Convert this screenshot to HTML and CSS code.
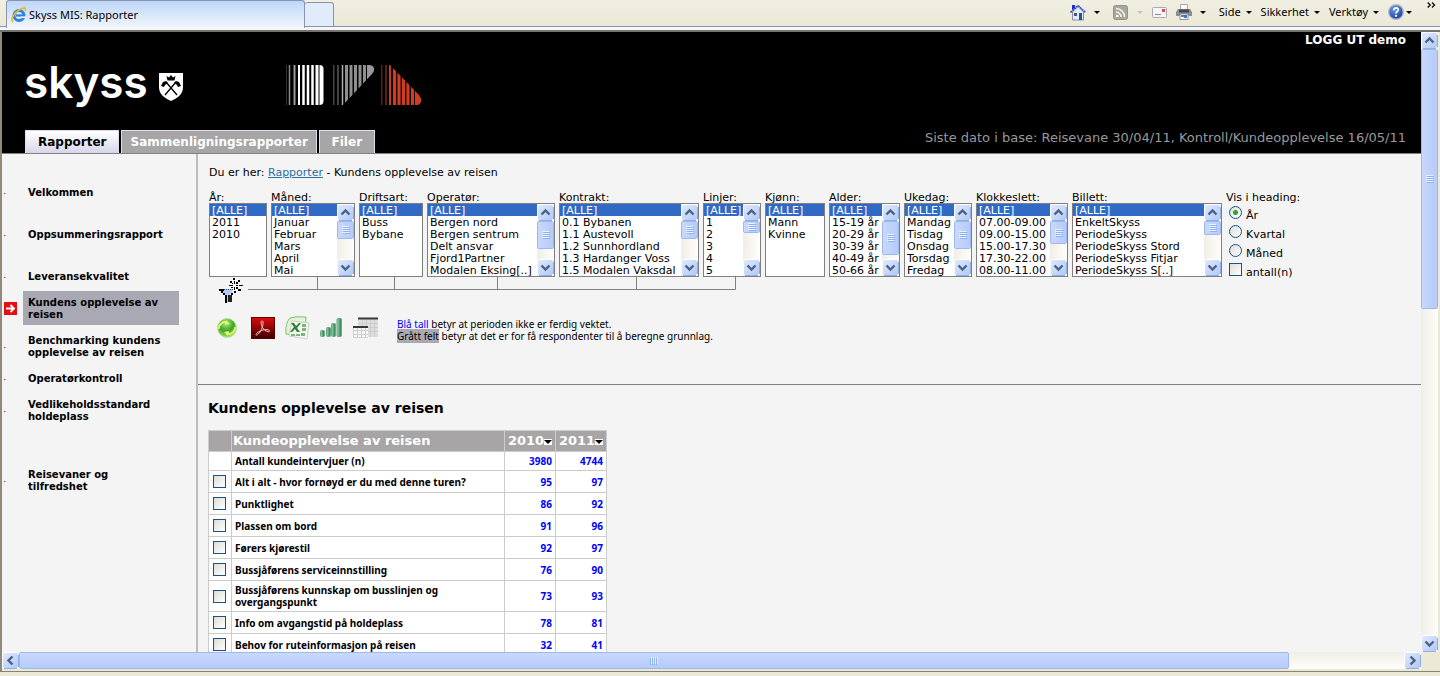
FILE: index.html
```html
<!DOCTYPE html>
<html lang="no">
<head>
<meta charset="utf-8">
<title>Skyss MIS: Rapporter</title>
<link rel="stylesheet" href="styles.css">
</head>
<body>
<svg width="0" height="0" class="defs" aria-hidden="true">
  <defs>
    <linearGradient id="btn" x1="0" y1="0" x2="1" y2="1"><stop offset="0" stop-color="#e1eafe"/><stop offset="1" stop-color="#aec8f7"/></linearGradient>
    <linearGradient id="green" x1="0" y1="0" x2="1" y2="0"><stop offset="0" stop-color="#9fd8b4"/><stop offset="1" stop-color="#1c7a45"/></linearGradient>
    <linearGradient id="red" x1="0" y1="0" x2="0" y2="1"><stop offset="0" stop-color="#e00a0a"/><stop offset="1" stop-color="#3c0000"/></linearGradient>
    <radialGradient id="ball" cx=".45" cy=".25" r=".8"><stop offset="0" stop-color="#a5ec7c"/><stop offset=".5" stop-color="#3fa52c"/><stop offset="1" stop-color="#b6ec6a"/></radialGradient>
    <radialGradient id="help" cx=".4" cy=".3" r=".7"><stop offset="0" stop-color="#6c9cf0"/><stop offset="1" stop-color="#1c3f9c"/></radialGradient>
  </defs>
  <symbol id="up" viewBox="0 0 17 17"><rect x=".5" y=".5" width="16" height="16" rx="2" fill="url(#btn)" stroke="#fff"/><path d="M2 16.500H15M16.500 3V15" stroke="#8fb0e0" fill="none"/><path d="M4.500 10.500 8.500 6.500l4 4" fill="none" stroke="#4d6185" stroke-width="2.400"/></symbol>
  <symbol id="down" viewBox="0 0 17 17"><rect x=".5" y=".5" width="16" height="16" rx="2" fill="url(#btn)" stroke="#fff"/><path d="M2 16.500H15M16.500 3V15" stroke="#8fb0e0" fill="none"/><path d="M4.500 6.500l4 4 4-4" fill="none" stroke="#4d6185" stroke-width="2.400"/></symbol>
  <symbol id="left" viewBox="0 0 17 17"><rect x=".5" y=".5" width="16" height="16" rx="2" fill="url(#btn)" stroke="#fff"/><path d="M2 16.500H15M16.500 3V15" stroke="#8fb0e0" fill="none"/><path d="M10.500 4.500l-4 4 4 4" fill="none" stroke="#4d6185" stroke-width="2.400"/></symbol>
  <symbol id="right" viewBox="0 0 17 17"><rect x=".5" y=".5" width="16" height="16" rx="2" fill="url(#btn)" stroke="#fff"/><path d="M2 16.500H15M16.500 3V15" stroke="#8fb0e0" fill="none"/><path d="M6.500 4.500l4 4-4 4" fill="none" stroke="#4d6185" stroke-width="2.400"/></symbol>
  <symbol id="grip" viewBox="0 0 8 8"><path d="M0 .5h7M0 2.500h7M0 4.500h7M0 6.500h7" stroke="#eef4fe"/><path d="M1 1.500h7M1 3.500h7M1 5.500h7M1 7.500h7" stroke="#8cb0f8"/></symbol>
  <symbol id="caret" viewBox="0 0 6 3"><path d="M0 0h6L3 3z" fill="currentColor"/></symbol>
</svg>

<header class="browser">
  <div class="browser-tabs">
    <button class="browser-tab">
      <svg width="16" height="16" viewBox="0 0 16 16"><circle cx="8" cy="8.500" r="5" fill="none" stroke="#2a86dc" stroke-width="3"/><path d="M5 8.500h9" stroke="#2a86dc" stroke-width="2.200"/><path d="M10 10.200h5" stroke="#eaf2fd" stroke-width="1.600"/><path d="M2 15C-1 13 3 6 8 3s8-3 6 1" fill="none" stroke="#efb52c" stroke-width="1.600"/></svg>
      <span>Skyss MIS: Rapporter</span>
    </button>
    <button class="browser-newtab" aria-label="Ny fane"></button>
  </div>
  <div class="browser-tools">
    <button class="tool" aria-label="Hjem"><svg width="16" height="17" viewBox="0 0 16 17"><path d="M2.500 8v8h11V8L8 2.500z" fill="#e4ebf5" stroke="#8492ac"/><path d="M.5 8.500 8 1.500l7.500 7" fill="none" stroke="#2f4fb8" stroke-width="1.600" stroke-dasharray="2 .6"/><path d="M2 1h3v3L2 6z" fill="#1c2fc8"/><path d="M9 9h3v7H9z" fill="#24558f"/><path d="M4 9h3v3H4z" fill="#4b5a78"/></svg><svg class="caret home-caret" width="6" height="3"><use href="#caret"/></svg></button>
    <button class="tool tool-rss" aria-label="Feeder"><svg width="15" height="15" viewBox="0 0 15 15"><rect x=".5" y=".5" width="14" height="14" rx="2" fill="#a9a79c" stroke="#96948a"/><circle cx="4.200" cy="11" r="1.300" fill="#fff"/><path d="M3 7a5 5 0 0 1 5 5M3 3.500A8.500 8.500 0 0 1 11.500 12" fill="none" stroke="#f4f3ec" stroke-width="1.600"/></svg><svg class="caret pale" width="6" height="3"><use href="#caret"/></svg></button>
    <button class="tool" aria-label="E-post"><svg width="15" height="11" viewBox="0 0 15 11"><rect x=".5" y=".5" width="14" height="10" rx="1" fill="#f6f6fa" stroke="#a9a9b4"/><path d="M10 2h3v3h-3z" fill="#e0484c"/><path d="M3 7.500h6" stroke="#8a8a96"/></svg></button>
    <button class="tool tool-print" aria-label="Skriv ut"><svg width="16" height="16" viewBox="0 0 16 16"><path d="M4.500 6V.5h7V6" fill="#fff" stroke="#a8a8ac"/><path d="M2 5h12l2 3v4H0V8z" fill="#8c8d92"/><path d="M3 5.500h10v3H3z" fill="#44464c"/><path d="M4 10h8v5.500H4z" fill="#fff" stroke="#8d9299"/><path d="M5 11h3v2H5z" fill="#2e9ca0"/><path d="M8 11h3v3H8z" fill="#3c78d0"/></svg><svg class="caret" width="6" height="3"><use href="#caret"/></svg></button>
    <button class="tool tool-text">Side <svg class="caret" width="6" height="3"><use href="#caret"/></svg></button>
    <button class="tool tool-text">Sikkerhet <svg class="caret" width="6" height="3"><use href="#caret"/></svg></button>
    <button class="tool tool-text">Verktøy <svg class="caret" width="6" height="3"><use href="#caret"/></svg></button>
    <button class="tool tool-help" aria-label="Hjelp"><svg width="16" height="16" viewBox="0 0 16 16"><circle cx="8" cy="8" r="7.300" fill="url(#help)" stroke="#a9b6cc" stroke-width="1.400"/><path d="M5.800 6.200C5.800 3 10.500 3.300 10.300 6 10.200 7.500 8 7.500 8 9.500" fill="none" stroke="#fff" stroke-width="1.700"/><circle cx="8" cy="11.800" r="1.100" fill="#fff"/></svg><svg class="caret" width="6" height="3"><use href="#caret"/></svg></button>
    <button class="tool-more" aria-label="Mer"><svg width="9" height="6" viewBox="0 0 9 6"><path d="M.7.5 3.200 3 .7 5.500M5 .5 7.500 3 5 5.500" fill="none" stroke="#111" stroke-width="1.400"/></svg></button>
  </div>
</header>

<div class="viewport">
  <div class="page">
    <div class="masthead">
      <div class="masthead-top">
        <div class="logo">
          <span class="wordmark">skyss</span>
          <svg width="24" height="28" viewBox="0 0 24 28"><path d="M0 0h24v14c0 7-5 11-12 14C5 25 0 21 0 14z" fill="#fff"/><path d="M6 22 17 9M18 22 7 9" stroke="#000" stroke-width="1.300"/><path d="M2 13 4 9l3-1 2 2-3 2-1 2zM22 13l-2-4-3-1-2 2 3 2 1 2z" fill="#000"/><path d="M7.500 3l2.500 1.500L12 2l2 2.500L16.500 3l-1 4.500h-7z" fill="#000"/></svg>
        </div>
        <svg class="stripes" width="136" height="40" viewBox="0 0 136 40">
          <path d="M.5 0v40" stroke="#333"/><path d="M3.500 0v40" stroke="#888" stroke-width="1.500"/><path d="M8.500 0v40" stroke="#999" stroke-width="2"/><path d="M13 0v40" stroke="#fff" stroke-width="2"/><path d="M17.500 0v40M22 0v40M26.500 0v40" stroke="#fff" stroke-width="2.500"/><path d="M31 0v40" stroke="#fff" stroke-width="3"/><path d="M33.500 0q4 0 4 4v32q0 4-4 4z" fill="#fff"/>
          <g transform="translate(47)"><clipPath id="c2"><path d="M0 0H37Q42 1 41 6L39 9 10 40H0z"/></clipPath><g clip-path="url(#c2)"><path d="M.5 0v40M5 0v40" stroke="#444" stroke-width="2"/><path d="M9.500 0v40" stroke="#aaa" stroke-width="1.500"/><path d="M13.500 0v40M18 0v40M22.500 0v40M27 0v40M31.500 0v40" stroke="#8f8f8f" stroke-width="3"/><path d="M34 0h7v40h-7z" fill="#999"/></g></g>
          <g transform="translate(95)"><clipPath id="c3"><path d="M0 0h9L38 30Q43 37 37 40H0z"/></clipPath><g clip-path="url(#c3)"><path d="M.5 0v40M5 0v40" stroke="#5a2217" stroke-width="2"/><path d="M9 0v40" stroke="#d9492b" stroke-width="1.800"/><path d="M13.500 0v40M18 0v40M22.500 0v40M27 0v40M31.500 0v40" stroke="#d03c20" stroke-width="3.200"/><path d="M34 0h7v40h-7z" fill="#d03c20"/></g></g>
        </svg>
        <a class="logout" href="#">LOGG UT demo</a>
      </div>
      <div class="masthead-bottom">
        <nav class="tabs">
          <a class="tab active" href="#">Rapporter</a>
          <a class="tab" href="#">Sammenligningsrapporter</a>
          <a class="tab" href="#">Filer</a>
        </nav>
        <p class="status">Siste dato i base: Reisevane 30/04/11, Kontroll/Kundeopplevelse 16/05/11</p>
      </div>
    </div>

    <div class="body">
      <nav class="sidebar">
        <a class="nav wide" href="#">Velkommen</a>
        <a class="nav wide" href="#">Oppsummeringsrapport</a>
        <a class="nav" href="#">Leveransekvalitet</a>
        <a class="nav current" href="#"><svg class="arrow" width="13" height="13" viewBox="0 0 13 13"><rect width="13" height="13" fill="#e80c14"/><path d="M2 6.500h8M6.500 3 10 6.500 6.500 10" fill="none" stroke="#fff" stroke-width="1.800"/></svg>Kundens opplevelse av reisen</a>
        <a class="nav" href="#">Benchmarking kundens opplevelse av reisen</a>
        <a class="nav" href="#">Operatørkontroll</a>
        <a class="nav last" href="#">Vedlikeholdsstandard holdeplass</a>
        <a class="nav narrow" href="#">Reisevaner og tilfredshet</a>
      </nav>

      <main class="content">
        <section class="filters">
          <p class="crumbs">Du er her: <a href="#">Rapporter</a> - Kundens opplevelse av reisen</p>
          <form class="filter-row">
            <div class="field w58"><label for="f1">År:</label><div class="list"><select id="f1" size="6" multiple><option selected>[ALLE]</option><option>2011</option><option>2010</option></select></div></div>
            <div class="field w84"><label for="f2">Måned:</label><div class="list"><select id="f2" size="6" multiple><option selected>[ALLE]</option><option>Januar</option><option>Februar</option><option>Mars</option><option>April</option><option>Mai</option></select><div class="bar"><svg width="17" height="17"><use href="#up"/></svg><i class="thumb h17"><svg width="8" height="8"><use href="#grip"/></svg></i><svg class="end" width="17" height="17"><use href="#down"/></svg></div></div></div>
            <div class="field w64"><label for="f3">Driftsart:</label><div class="list"><select id="f3" size="6" multiple><option selected>[ALLE]</option><option>Buss</option><option>Bybane</option></select></div></div>
            <div class="field w128"><label for="f4">Operatør:</label><div class="list"><select id="f4" size="6" multiple><option selected>[ALLE]</option><option>Bergen nord</option><option>Bergen sentrum</option><option>Delt ansvar</option><option>Fjord1Partner</option><option>Modalen Eksing[..]</option></select><div class="bar"><svg width="17" height="17"><use href="#up"/></svg><i class="thumb h26"><svg width="8" height="8"><use href="#grip"/></svg></i><svg class="end" width="17" height="17"><use href="#down"/></svg></div></div></div>
            <div class="field w140"><label for="f5">Kontrakt:</label><div class="list"><select id="f5" size="6" multiple><option selected>[ALLE]</option><option>0.1 Bybanen</option><option>1.1 Austevoll</option><option>1.2 Sunnhordland</option><option>1.3 Hardanger Voss</option><option>1.5 Modalen Vaksdal</option></select><div class="bar"><svg width="17" height="17"><use href="#up"/></svg><i class="thumb h17"><svg width="8" height="8"><use href="#grip"/></svg></i><svg class="end" width="17" height="17"><use href="#down"/></svg></div></div></div>
            <div class="field w58"><label for="f6">Linjer:</label><div class="list"><select id="f6" size="6" multiple><option selected>[ALLE]</option><option>1</option><option>2</option><option>3</option><option>4</option><option>5</option></select><div class="bar"><svg width="17" height="17"><use href="#up"/></svg><i class="thumb h10"><svg width="8" height="8"><use href="#grip"/></svg></i><svg class="end" width="17" height="17"><use href="#down"/></svg></div></div></div>
            <div class="field w60"><label for="f7">Kjønn:</label><div class="list"><select id="f7" size="6" multiple><option selected>[ALLE]</option><option>Mann</option><option>Kvinne</option></select></div></div>
            <div class="field w71"><label for="f8">Alder:</label><div class="list"><select id="f8" size="6" multiple><option selected>[ALLE]</option><option>15-19 år</option><option>20-29 år</option><option>30-39 år</option><option>40-49 år</option><option>50-66 år</option></select><div class="bar"><svg width="17" height="17"><use href="#up"/></svg><i class="thumb h32"><svg width="8" height="8"><use href="#grip"/></svg></i><svg class="end" width="17" height="17"><use href="#down"/></svg></div></div></div>
            <div class="field w68"><label for="f9">Ukedag:</label><div class="list"><select id="f9" size="6" multiple><option selected>[ALLE]</option><option>Mandag</option><option>Tisdag</option><option>Onsdag</option><option>Torsdag</option><option>Fredag</option></select><div class="bar"><svg width="17" height="17"><use href="#up"/></svg><i class="thumb h26"><svg width="8" height="8"><use href="#grip"/></svg></i><svg class="end" width="17" height="17"><use href="#down"/></svg></div></div></div>
            <div class="field w92"><label for="f10">Klokkeslett:</label><div class="list"><select id="f10" size="6" multiple><option selected>[ALLE]</option><option>07.00-09.00</option><option>09.00-15.00</option><option>15.00-17.30</option><option>17.30-22.00</option><option>08.00-11.00</option></select><div class="bar"><svg width="17" height="17"><use href="#up"/></svg><i class="thumb h22"><svg width="8" height="8"><use href="#grip"/></svg></i><svg class="end" width="17" height="17"><use href="#down"/></svg></div></div></div>
            <div class="field w150"><label for="f11">Billett:</label><div class="list"><select id="f11" size="6" multiple><option selected>[ALLE]</option><option>EnkeltSkyss</option><option>PeriodeSkyss</option><option>PeriodeSkyss Stord</option><option>PeriodeSkyss Fitjar</option><option>PeriodeSkyss S[..]</option></select><div class="bar"><svg width="17" height="17"><use href="#up"/></svg><i class="thumb h12"><svg width="8" height="8"><use href="#grip"/></svg></i><svg class="end" width="17" height="17"><use href="#down"/></svg></div></div></div>
            <fieldset class="heading-choice">
              <legend>Vis i heading:</legend>
              <label><input type="radio" name="h" checked><span>År</span></label>
              <label><input type="radio" name="h"><span>Kvartal</span></label>
              <label><input type="radio" name="h"><span>Måned</span></label>
              <label><input type="checkbox"><span>antall(n)</span></label>
            </fieldset>
          </form>
          <div class="connectors">
            <button class="icon-btn" aria-label="Filter"><svg width="24" height="26" viewBox="0 0 24 26"><path d="M2 11h12l-1 3-3 3v7H7v-7l-4-3z" fill="#a9cdf8"/><path d="M0 11h5v2H0zM2 13h2v2H2zM4 15h2v2H4zM6 17h2v8H6zM12 15h2v2h-2z" fill="#000"/><path d="M9 17h4v7H9z" fill="#222"/><path d="M5 11.500h9" stroke="#446" stroke-dasharray="1 1"/><path d="M14 0h2v2h-2zM15 3h1v3h-1zM15 9h1v3h-1zM15 13h2v2h-2zM10 7h4v1h-4zM17 7h2v1h-2zM20 7h4v1h-4zM11 3h2v2h-2zM13 5h1v1h-1zM19 2h2v2h-2zM17 4h2v2h-2zM17 9h2v2h-2zM19 11h3v2h-3zM12 9h2v1h-2z" fill="#000"/></svg></button>
            <svg width="488" height="13" viewBox="0 0 488 13"><path d="M0 12.500h487.500V0M69.500 0v12M146.500 0v12M249.500 0v12M388.500 0v12" fill="none" stroke="#808080"/></svg>
          </div>
          <div class="actions">
            <div class="action-icons">
              <button class="icon-btn" aria-label="Oppdater"><svg width="20" height="20" viewBox="0 0 20 20"><circle cx="10" cy="10" r="9.500" fill="url(#ball)" stroke="#b9dfa4"/><path d="M1.500 11C2 6 6 3 10 4.500" fill="none" stroke="#e9f36b" stroke-width="2"/><path d="M9 2l4 4-5 1z" fill="#e9f36b"/><path d="M18.500 9c-.5 5-4.500 8-8.500 6.500" fill="none" stroke="#e9f36b" stroke-width="2"/><path d="M11 18l-4-4 5-1z" fill="#e9f36b"/></svg></button>
              <button class="icon-btn" aria-label="PDF"><svg width="24" height="22" viewBox="0 0 24 22"><rect x=".5" y=".5" width="23" height="21" fill="url(#red)" stroke="#5a0505"/><path d="M11 4c2 0 1 4 0 7-1.500 4-4 7-5.500 7-2 0 1-3 5-4.500 4-1.500 8-1 8 .5 0 2-5 0-7-3.500C10 7 9.500 4 11 4z" fill="none" stroke="#f3c9c9"/></svg></button>
              <button class="icon-btn" aria-label="Excel"><svg width="25" height="24" viewBox="0 0 25 24"><path d="M5 2Q11 0 21 1l-1 18L1 18Q0 7 5 2z" fill="#e3f3da" stroke="#83bd70"/><path d="M7 5l17 2-2 16L4 20z" fill="#f4f8f2" stroke="#c9d5c4"/><path d="M6 7h3l2 3 3-3h2l-4 5 3 4h-3l-2-3-3 3H5l4-5z" fill="#2f7e36"/><path d="M17 8h4v3h-4zM17 12h4v3h-4zM16 17h4v3h-4zM11 18h4v2h-4zM6 18h4v2H6z" fill="#7db67a"/></svg></button>
              <button class="icon-btn" aria-label="Graf"><svg width="23" height="20" viewBox="0 0 23 20"><rect x=".5" y="12.500" width="4" height="6" rx="1" fill="url(#green)" stroke="#6fa588"/><rect x="6.500" y="9.500" width="4" height="9" rx="1" fill="url(#green)" stroke="#6fa588"/><rect x="11.500" y="5.500" width="4" height="13" rx="1" fill="url(#green)" stroke="#6fa588"/><rect x="17" y=".5" width="4.500" height="18" rx="1" fill="url(#green)" stroke="#6fa588"/></svg></button>
              <button class="icon-btn" aria-label="Tabell"><svg width="26" height="22" viewBox="0 0 26 22"><path d="M5 2h20v18H5z" fill="#dedede"/><path d="M9.500 3v17M13.500 3v17M17.500 3v17M21.500 3v17M5 6.500h20M5 10.500h20M5 14.500h20" stroke="#ccc"/><path d="M5 1.500h20" stroke="#333840" stroke-width="2"/><path d="M0 10h15v11H0z" fill="#f6f6f6"/><path d="M.5 11v10M4.500 11v10M8.500 11v10M12.500 11v10M0 13.500h15M0 17.500h15M0 20.500h15" stroke="#d0d0d0"/><path d="M0 10h15" stroke="#333840" stroke-width="2"/></svg></button>
            </div>
            <p class="legend"><span class="blue">Blå tall</span> betyr at perioden ikke er ferdig vektet.<br><span class="grey">Grått felt</span> betyr at det er for få respondenter til å beregne grunnlag.</p>
          </div>
        </section>

        <section class="report">
          <h1>Kundens opplevelse av reisen</h1>
          <table>
            <colgroup><col class="c-check"><col class="c-name"><col class="c-year"><col class="c-year"></colgroup>
            <thead><tr><th></th><th>Kundeopplevelse av reisen</th><th class="year">2010<button class="sort" aria-label="Sorter 2010"><svg width="8" height="4" viewBox="0 0 8 4"><path d="M0 0h8L4 4z"/></svg></button></th><th class="year">2011<button class="sort" aria-label="Sorter 2011"><svg width="8" height="4" viewBox="0 0 8 4"><path d="M0 0h8L4 4z"/></svg></button></th></tr></thead>
            <tbody>
              <tr class="count"><td></td><td>Antall kundeintervjuer (n)</td><td>3980</td><td>4744</td></tr>
              <tr><td><input type="checkbox" id="r1"></td><td><label for="r1">Alt i alt - hvor fornøyd er du med denne turen?</label></td><td>95</td><td>97</td></tr>
              <tr><td><input type="checkbox" id="r2"></td><td><label for="r2">Punktlighet</label></td><td>86</td><td>92</td></tr>
              <tr><td><input type="checkbox" id="r3"></td><td><label for="r3">Plassen om bord</label></td><td>91</td><td>96</td></tr>
              <tr><td><input type="checkbox" id="r4"></td><td><label for="r4">Førers kjørestil</label></td><td>92</td><td>97</td></tr>
              <tr><td><input type="checkbox" id="r5"></td><td><label for="r5">Bussjåførens serviceinnstilling</label></td><td>76</td><td>90</td></tr>
              <tr class="double"><td><input type="checkbox" id="r6"></td><td><label for="r6">Bussjåførens kunnskap om busslinjen og overgangspunkt</label></td><td>73</td><td>93</td></tr>
              <tr><td><input type="checkbox" id="r7"></td><td><label for="r7">Info om avgangstid på holdeplass</label></td><td>78</td><td>81</td></tr>
              <tr><td><input type="checkbox" id="r8"></td><td><label for="r8">Behov for ruteinformasjon på reisen</label></td><td>32</td><td>41</td></tr>
            </tbody>
          </table>
        </section>
      </main>
    </div>
  </div>
  <div class="bar page-v"><svg width="17" height="17"><use href="#up"/></svg><i class="thumb"><svg width="8" height="8"><use href="#grip"/></svg></i><svg class="end" width="17" height="17"><use href="#down"/></svg></div>
  <div class="page-h"><svg width="17" height="17"><use href="#left"/></svg><i class="thumb"><svg class="turned" width="8" height="8"><use href="#grip"/></svg></i><svg class="end" width="17" height="17"><use href="#right"/></svg></div>
</div>
<footer class="browser-foot"></footer>
</body>
</html>
```
FILE: styles.css
```css
* { box-sizing: border-box; }
body {
  margin: 0;
  height: 100vh;
  overflow: hidden;
  display: flex;
  flex-direction: column;
  background: #ece9d8;
  color: #000;
  font: 11px/12px "DejaVu Sans", Verdana, sans-serif;
}
p, h1 { margin: 0; }
svg { display: block; flex: none; }
.defs { position: absolute; }
button { font: inherit; color: inherit; border: 0; padding: 0; background: none; }

/* browser frame */
.browser {
  flex: none;
  height: 32px;
  display: flex;
  justify-content: space-between;
  background: linear-gradient(#f1efe2, #ebe8d7) top / 100% 26px no-repeat, linear-gradient(#8c93a8 0 0) 0 26px / 100% 1px no-repeat, #f3f6fc;
  border-bottom: 2px solid #77736a;
  font: 11px/14px "Noto Sans", Tahoma, sans-serif;
}
.browser-tabs { display: flex; padding-left: 6px; }
.browser-tab {
  width: 299px;
  height: 28px;
  display: flex;
  align-items: center;
  gap: 2px;
  padding-left: 4px;
  border: 1px solid #8c93a8;
  border-width: 1px 1px 0;
  border-radius: 3px 3px 0 0;
  background: linear-gradient(#bcd7fa, #f3f6fc);
}
.browser-newtab {
  width: 29px;
  height: 25px;
  margin-top: 2px;
  border: 1px solid #8c93a8;
  border-left: 0;
  border-radius: 3px 3px 0 0;
  background: #e1ecfb;
}
.browser-tools { display: flex; height: 24px; align-items: center; gap: 9px; padding-right: 4px; }
.tool { display: flex; align-items: center; gap: 5px; }
.home-caret { margin: 0 4px 0 3px; }
.pale { color: #c4c2b6; }
.tool-rss { gap: 9px; }
.tool-print { gap: 8px; margin-right: 4px; }
.tool-help { gap: 2px; }
.tool-more { align-self: flex-start; margin: 2px 0 0 6px; }
.browser-foot { flex: none; height: 5px; border-top: 1px solid #868376; }

/* scrolling area */
.viewport {
  flex: 1;
  min-height: 0;
  display: grid;
  grid-template: minmax(0, 1fr) 19px / minmax(0, 1fr) 19px;
  border-left: 2px solid #8e8b7d;
  background: #ece9d8;
}
.page { overflow: hidden; display: flex; flex-direction: column; background: #f4f4f4; }
.bar {
  flex: none;
  width: 17px;
  display: flex;
  flex-direction: column;
  background: linear-gradient(90deg, #f0eee6, #fefefb);
}
.end { margin-top: auto; }
.thumb {
  display: flex;
  align-items: center;
  justify-content: center;
  border: 1px solid #fff;
  border-radius: 2px;
  outline: 1px solid #9cb8ec;
  outline-offset: -1px;
  background: linear-gradient(90deg, #c9d8fc, #b6cbfa);
  overflow: hidden;
}
.h10 { height: 12px; }
.h12 { height: 14px; }
.h17 { height: 18px; }
.h22 { height: 23px; }
.h26 { height: 28px; }
.h32 { height: 34px; }
.page-v { justify-self: start; }
.page-v .thumb { flex: 0 0 42%; }
.page-h { height: 17px; display: flex; background: linear-gradient(#f0eee6, #fefefb); }
.page-h .thumb { flex: 0 0 calc(91% - 21px); background: linear-gradient(#c9d8fc, #b6cbfa); }
.page-h .end { margin: 0 0 0 auto; }
.turned { transform: rotate(90deg); }

/* masthead */
.masthead { flex: none; background: #000; border-bottom: 1px solid #808080; }
.masthead-top { display: flex; height: 98px; padding: 0 15px 0 22px; }
.logo { display: flex; align-items: flex-start; gap: 11px; width: 262px; }
.wordmark { color: #fff; font: 600 44px/48px Inter, sans-serif; margin-top: 26px; }
.logo svg { margin-top: 41px; }
.stripes { margin-top: 33px; }
.logout { margin-left: auto; color: #fff; font-weight: bold; font-size: 12px; line-height: 16px; text-decoration: none; }
.masthead-bottom { display: flex; justify-content: space-between; padding: 0 15px 0 23px; }
.tabs { display: flex; gap: 2px; }
.tab {
  min-width: 56px;
  padding: 0 8px;
  border: 1px solid #dcdcec;
  border-bottom: 0;
  background: #a7a5a6;
  color: #fff;
  font-weight: bold;
  font-size: 12px;
  line-height: 22px;
  text-align: center;
  text-decoration: none;
}
.tab.active { padding: 0 12px; background: linear-gradient(#fff, #d6d6ea); color: #000; }
.status { color: #999; font-size: 13px; line-height: 16px; }

/* page body */
.body { flex: 1; min-height: 0; display: flex; }
.sidebar { flex: none; width: 196px; padding-top: 32px; border-right: 2px solid #bdbdc1; }
.nav {
  position: relative;
  display: block;
  margin: 0 17px 4px 21px;
  padding: 1px 4px 9px 5px;
  color: #000;
  font-weight: bold;
  font-size: 10px;
  text-decoration: none;
}
.nav.wide { margin-bottom: 20px; }
.nav.last { margin-bottom: 36px; }
.nav.narrow { padding-right: 32px; }
.nav.current { margin-bottom: 9px; margin-top: -5px; padding-top: 6px; padding-bottom: 4px; background: #a9a9b3; }
.nav::before { content: ""; position: absolute; left: -19px; top: calc(50% - 4px); width: 1px; height: 1px; background: #f00; }
.nav.current::before { display: none; }
.arrow { position: absolute; left: -19px; top: 11px; }
.content { flex: 1; min-width: 0; }
.filters { height: 231px; padding: 13px 0 0 11px; border-bottom: 1px solid #808080; }
.crumbs { padding-bottom: 12px; }
.crumbs a { color: #2c6fa3; }

.filter-row { display: flex; gap: 4px; align-items: flex-start; height: 86px; }
.field { flex: none; display: flex; flex-direction: column; }
.field > label { height: 12px; line-height: 14px; white-space: nowrap; }
.list { display: flex; height: 74px; border: 1px solid #808080; background: #fff; }
select {
  flex: 1;
  min-width: 0;
  height: 72px;
  margin: 0;
  padding: 0;
  border: 0;
  border-radius: 0;
  outline: 0;
  overflow: hidden;
  background: #fff;
  font: inherit;
  color: #000;
  scrollbar-width: none;
}
option { height: 12px; min-height: 12px; padding: 0 2px; line-height: 12px; }
option:checked { background: #316ac5 linear-gradient(#316ac5, #316ac5); color: #fff; -webkit-text-fill-color: #fff; }
.w58 { width: 58px; }
.w60 { width: 60px; }
.w64 { width: 64px; }
.w68 { width: 68px; }
.w71 { width: 71px; }
.w84 { width: 84px; }
.w92 { width: 92px; }
.w128 { width: 128px; }
.w140 { width: 140px; }
.w150 { width: 150px; }
.heading-choice { margin: 0; padding: 0; border: 0; display: flex; flex-direction: column; }
.heading-choice legend { height: 12px; padding: 0; line-height: 14px; white-space: nowrap; }
.heading-choice label { display: flex; gap: 4px; height: 19px; padding: 3px 0 0 3px; }
.heading-choice span { padding-top: 4px; }
input { appearance: none; flex: none; margin: 0; width: 13px; height: 13px; border: 1px solid #1c5180; background: linear-gradient(135deg, #dcdcd7, #fff); }
input[type="radio"] { border-radius: 50%; }
input[type="radio"]:checked { background: radial-gradient(circle, #2fa52f 0 2px, transparent 3px), linear-gradient(135deg, #dcdcd7, #fff); }

.connectors { display: flex; gap: 5px; padding-left: 10px; height: 27px; }
.actions { display: flex; align-items: flex-start; gap: 18px; padding: 12px 0 0 8px; }
.action-icons { display: flex; align-items: center; gap: 10px; }
.action-icons .icon-btn:first-child { margin-right: 4px; }
.legend { padding-top: 2px; font-family: "Noto Sans", sans-serif; font-size: 10px; }
.blue { color: #00f; }
.grey { background: #a9a9b3; }

/* report */
.report { padding: 14px 0 0 10px; }
h1 { font-size: 14px; line-height: 18px; }
table { margin-top: 13px; width: 399px; table-layout: fixed; border-collapse: collapse; background: #fff; font: bold 10px/12px "Noto Sans", sans-serif; }
.c-check { width: 23px; }
.c-name { width: 273px; }
.c-year { width: 51px; }
th, td { border: 1px solid #ccc; padding: 0 3px; height: 22px; text-align: left; }
th { height: 21px; padding: 0 1px; background: #a7a5a6; color: #fff; font: bold 13px/18px "DejaVu Sans", sans-serif; }
.year { text-align: center; white-space: nowrap; }
.count td { height: 19px; }
.double td { height: 31px; }
td:first-child { padding: 0 4px; }
td:nth-child(n+3) { color: #00f; text-align: right; }
td input { display: block; }
.sort { display: inline-block; vertical-align: middle; padding: 1px 0; background: #fff; }
```
